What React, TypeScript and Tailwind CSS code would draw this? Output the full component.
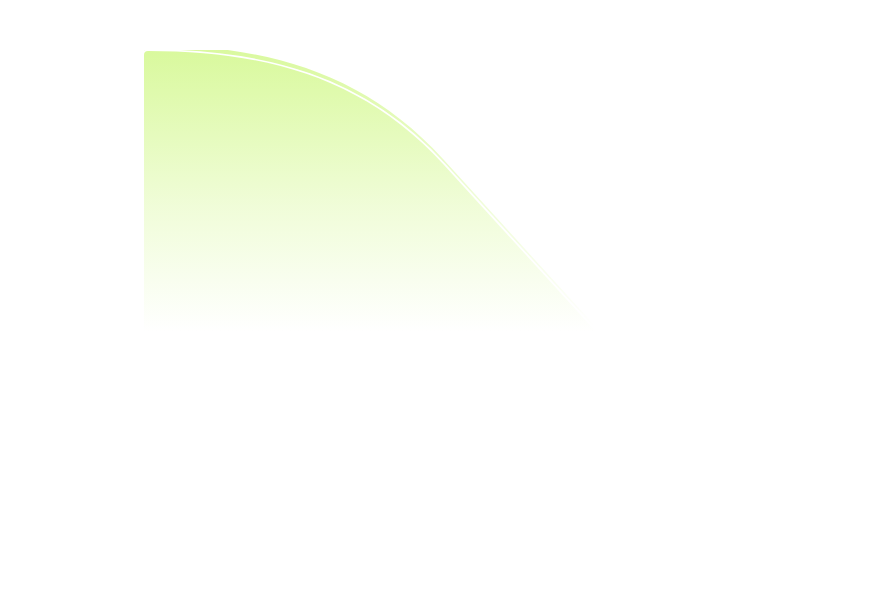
import React from "react";

// Soft lime wave used as a decorative hero backdrop.
function LimeWave() {
  const main = "M0,5 Q0,1 4,1 C120,1 220,27 300,115 L454,284 L0,284 Z";
  return (
    <svg width="464" height="282" viewBox="0 0 464 282" className="block">
      <defs>
        <linearGradient id="lime" x1="0" y1="0" x2="0" y2="282" gradientUnits="userSpaceOnUse">
          <stop offset="0" stopColor="#d9f99d" stopOpacity="1" />
          <stop offset="0.55" stopColor="#d9f99d" stopOpacity="0.4" />
          <stop offset="1" stopColor="#d9f99d" stopOpacity="0" />
        </linearGradient>
      </defs>
      <path d={main} transform="translate(-1,-6)" fill="url(#lime)" />
      <path d={main} fill="#ffffff" stroke="#ffffff" strokeWidth="3.5" />
      <path d={main} fill="url(#lime)" />
    </svg>
  );
}

export default function App() {
  return (
    <div className="h-[594px] w-[882px] bg-white pl-[144px] pt-[50px]">
      <LimeWave />
    </div>
  );
}
